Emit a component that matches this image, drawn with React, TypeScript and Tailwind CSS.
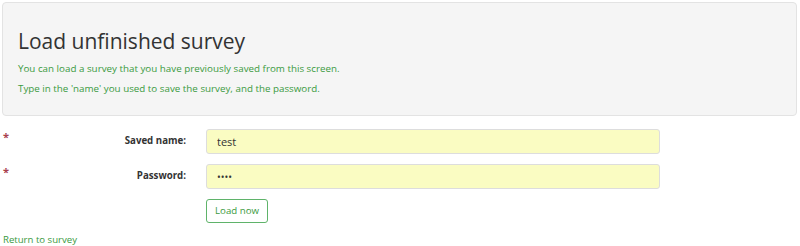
import React from "react";

export default function App() {
  const font = { fontFamily: '"Open Sans", "Noto Sans", sans-serif' };
  return (
    <div className="w-[800px] h-[246px] bg-white overflow-hidden" style={font}>
      <div className="ml-[2px] mt-[2px] w-[795px] h-[114px] bg-[#f5f5f5] border border-[#e3e3e3] rounded-[4px] pl-[15px] pt-[24px]">
        <h1 className="text-[21px] leading-[28px] text-[#333333] font-normal">Load unfinished survey</h1>
        <p className="mt-[7px] text-[9.8px] leading-[14px] text-[#3a9a3e]">You can load a survey that you have previously saved from this screen.</p>
        <p className="mt-[6px] text-[9.8px] leading-[14px] text-[#3a9a3e]">Type in the 'name' you used to save the survey, and the password.</p>
      </div>
      <div className="mt-[13px] flex flex-col gap-[10px]">
        <div className="flex items-center h-[25px]">
          <span className="w-[186px] relative flex justify-end text-[9.7px] font-bold text-[#333333]">
            <span className="absolute left-[3px] top-[-5px] text-[#a8404e] text-[11px] font-bold">*</span>
            Saved name:
          </span>
          <input
            className="ml-[20px] w-[454px] h-[25px] bg-[#fafcc2] border border-[#dddddd] rounded-[3px] px-[10px] text-[11px] text-[#333333] outline-none"
            style={font}
            defaultValue="test"
          />
        </div>
        <div className="flex items-center h-[25px]">
          <span className="w-[186px] relative flex justify-end text-[9.7px] font-bold text-[#333333]">
            <span className="absolute left-[3px] top-[-5px] text-[#a8404e] text-[11px] font-bold">*</span>
            Password:
          </span>
          <input
            type="password"
            className="ml-[20px] w-[454px] h-[25px] bg-[#fafcc2] border border-[#dddddd] rounded-[3px] px-[10px] text-[10px] text-[#333333] outline-none"
            defaultValue="test"
          />
        </div>
        <div className="flex">
          <button className="ml-[206px] w-[62px] h-[24px] border border-[#5fb36a] rounded-[3px] bg-white text-[9.7px] text-[#3a9a3e]" style={font}>Load now</button>
        </div>
      </div>
      <a className="block mt-[10px] ml-[3px] text-[9.6px] leading-[14px] text-[#3a9a3e]">Return to survey</a>
    </div>
  );
}
